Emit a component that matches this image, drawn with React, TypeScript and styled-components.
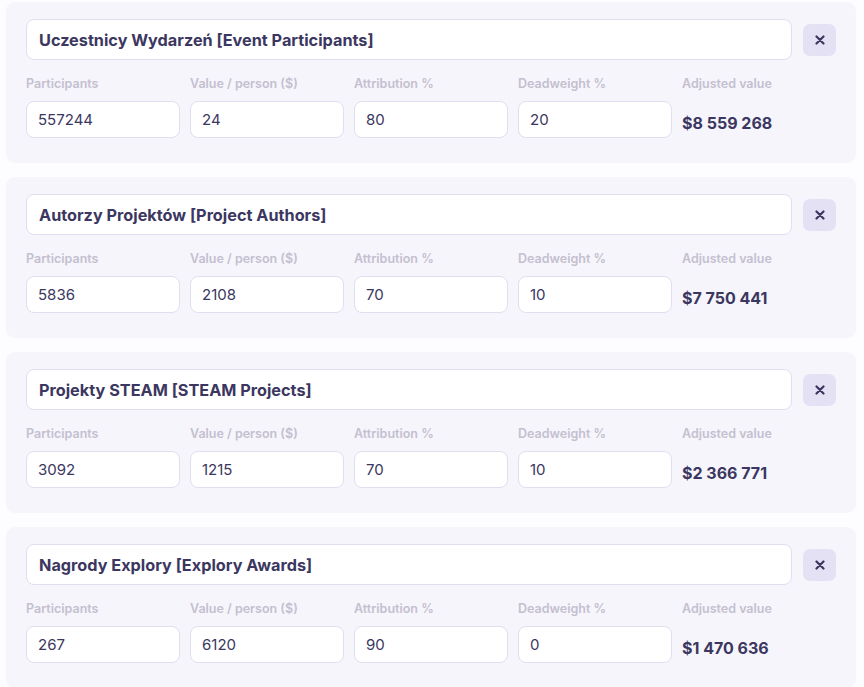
import React from 'react';
import styled, { createGlobalStyle } from 'styled-components';

type Row = {
  title: string;
  participants: string;
  value: string;
  attribution: string;
  deadweight: string;
  adjusted: string;
};

const rows: Row[] = [
  { title: 'Uczestnicy Wydarzeń [Event Participants]', participants: '557244', value: '24', attribution: '80', deadweight: '20', adjusted: '$8 559 268' },
  { title: 'Autorzy Projektów [Project Authors]', participants: '5836', value: '2108', attribution: '70', deadweight: '10', adjusted: '$7 750 441' },
  { title: 'Projekty STEAM [STEAM Projects]', participants: '3092', value: '1215', attribution: '70', deadweight: '10', adjusted: '$2 366 771' },
  { title: 'Nagrody Explory [Explory Awards]', participants: '267', value: '6120', attribution: '90', deadweight: '0', adjusted: '$1 470 636' },
];

const GlobalStyle = createGlobalStyle`
  body {
    margin: 0;
    background: #fdfcff;
    font-family: Inter, "Noto Sans", sans-serif;
    color: #3b3760;
  }
`;

const App = () => {
  return (
    <>
      <GlobalStyle />
      <List>
        {rows.map((r) => (
          <Card key={r.title}>
            <TitleRow>
              <TitleInput value={r.title} readOnly />
              <CloseButton aria-label="remove">
                <svg width="10" height="10" viewBox="0 0 10 10">
                  <path d="M1.5 1.5 L8.5 8.5 M8.5 1.5 L1.5 8.5" stroke="#3b3760" strokeWidth="2.2" strokeLinecap="round" />
                </svg>
              </CloseButton>
            </TitleRow>
            <Fields>
              <Field>
                <Label>Participants</Label>
                <NumInput value={r.participants} readOnly />
              </Field>
              <Field>
                <Label>Value / person ($)</Label>
                <NumInput value={r.value} readOnly />
              </Field>
              <Field>
                <Label>Attribution %</Label>
                <NumInput value={r.attribution} readOnly />
              </Field>
              <Field>
                <Label>Deadweight %</Label>
                <NumInput value={r.deadweight} readOnly />
              </Field>
              <Field>
                <Label>Adjusted value</Label>
                <Adjusted>{r.adjusted}</Adjusted>
              </Field>
            </Fields>
          </Card>
        ))}
      </List>
    </>
  );
};

export default App;

const List = styled.div`
  display: flex;
  flex-direction: column;
  gap: 14px;
  padding: 2px 8px 0 6px;
`;

const Card = styled.div`
  background: #f6f5fc;
  border-radius: 9px;
  padding: 17px 20px 25px;
`;

const TitleRow = styled.div`
  display: flex;
  align-items: center;
  gap: 11px;
`;

const TitleInput = styled.input`
  flex: 1;
  height: 41px;
  box-sizing: border-box;
  border: 1px solid #e1def0;
  border-radius: 8px;
  background: #fff;
  padding: 0 12px;
  font-family: inherit;
  font-size: 16.25px;
  font-weight: 700;
  color: #3b3760;
  outline: none;
`;

const CloseButton = styled.button`
  width: 33px;
  height: 32px;
  border: none;
  border-radius: 7px;
  background: #e5e1f4;
  display: flex;
  align-items: center;
  justify-content: center;
  padding: 0;
  cursor: pointer;
`;

const Fields = styled.div`
  display: grid;
  grid-template-columns: repeat(5, 1fr);
  gap: 10px;
  margin-top: 14px;
`;

const Field = styled.div`
  display: flex;
  flex-direction: column;
`;

const Label = styled.div`
  font-size: 12.5px;
  font-weight: 600;
  color: #c4c0cf;
  line-height: 20px;
  margin-bottom: 7px;
`;

const NumInput = styled.input`
  height: 37px;
  box-sizing: border-box;
  width: 100%;
  border: 1px solid #e1def0;
  border-radius: 8px;
  background: #fff;
  padding: 0 11px;
  font-family: inherit;
  font-size: 15px;
  color: #3b3760;
  outline: none;
`;

const Adjusted = styled.div`
  height: 37px;
  display: flex;
  align-items: center;
  padding-top: 7px;
  box-sizing: border-box;
  font-size: 16px;
  font-weight: 700;
  color: #3b3760;
`;
